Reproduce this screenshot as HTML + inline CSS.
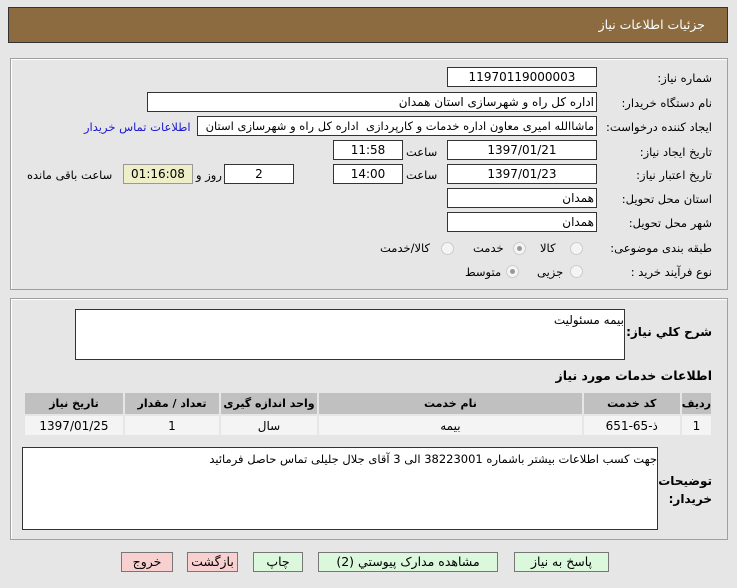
<html><head><style>
body{margin:0;width:737px;height:588px;background:#e6e6e6;font-family:Tahoma,"DejaVu Sans","Liberation Sans",sans-serif;font-size:11.5px;direction:rtl;position:relative;overflow:hidden}
.a{position:absolute}
.hdr{left:8px;top:7px;width:718px;height:34px;background:#8b6b3f;border:1px solid #333}
.hdr span{position:absolute;right:22px;top:9px;color:#fff;font-size:12.5px}
.pn{border:1px solid #a0a0a0;background:#e6e6e6;box-shadow:inset 1px 1px 0 #fff}
.in{position:absolute;background:#fff;border:1px solid #333;height:18px;line-height:18px;box-sizing:content-box;text-align:center;font-size:12px;white-space:nowrap;overflow:hidden}
.r{text-align:right;padding-right:2px}
.lb{position:absolute;right:25px;white-space:nowrap}
.t{position:absolute;white-space:nowrap}
.rd{position:absolute;width:11px;height:11px;border-radius:50%;border:1px solid #ccc;background:#f4f4f4}
.rd.c::after{content:"";position:absolute;left:3px;top:3px;width:5px;height:5px;border-radius:50%;background:#999}
table{border-collapse:collapse;position:absolute;left:23px;top:391px;width:690px;font-size:12px}
td,th{border:2px solid #e6e6e6;text-align:center;padding:0}
th{background:#c0c0c0;font-weight:bold;font-size:11px;height:23px}
td{background:#f4f4f4;height:21px}
.b{position:absolute;top:552px;height:18px;border:1px solid #777;text-align:center;line-height:18px;font-size:12.5px}
</style></head><body>
<div class="a hdr"><span>جزئیات اطلاعات نیاز</span></div>
<div class="a pn" style="left:10px;top:58px;width:716px;height:230px"></div>
<div class="a pn" style="left:10px;top:298px;width:716px;height:240px"></div>

<div class="lb" style="top:71px">شماره نیاز:</div>
<div class="in" style="left:447px;top:67px;width:148px">11970119000003</div>
<div class="lb" style="top:96px">نام دستگاه خریدار:</div>
<div class="in r" style="left:147px;top:92px;width:446px">اداره کل راه و شهرسازی استان همدان</div>
<div class="lb" style="top:120px">ایجاد کننده درخواست:</div>
<div class="in r" style="left:197px;top:116px;width:396px;font-size:11.5px">ماشاالله امیری معاون اداره خدمات و کارپردازی&nbsp; اداره کل راه و شهرسازی استان</div>
<div class="t" style="left:84px;top:120px;color:#1a1acc">اطلاعات تماس خریدار</div>
<div class="lb" style="top:145px">تاریخ ایجاد نیاز:</div>
<div class="in" style="left:447px;top:140px;width:148px">1397/01/21</div>
<div class="t" style="left:406px;top:145px">ساعت</div>
<div class="in" style="left:333px;top:140px;width:68px">11:58</div>
<div class="lb" style="top:168px">تاریخ اعتبار نیاز:</div>
<div class="in" style="left:447px;top:164px;width:148px">1397/01/23</div>
<div class="t" style="left:406px;top:168px">ساعت</div>
<div class="in" style="left:333px;top:164px;width:68px">14:00</div>
<div class="in" style="left:224px;top:164px;width:68px">2</div>
<div class="t" style="left:196px;top:168px">روز و</div>
<div class="in" style="left:123px;top:164px;width:68px;background:#eeeec8;border-color:#999">01:16:08</div>
<div class="t" style="left:27px;top:168px">ساعت باقی مانده</div>
<div class="lb" style="top:192px">استان محل تحویل:</div>
<div class="in r" style="left:447px;top:188px;width:146px">همدان</div>
<div class="lb" style="top:216px">شهر محل تحویل:</div>
<div class="in r" style="left:447px;top:212px;width:146px">همدان</div>
<div class="lb" style="top:241px">طبقه بندی موضوعی:</div>
<div class="rd" style="left:570px;top:242px"></div><div class="t" style="left:540px;top:241px">کالا</div>
<div class="rd c" style="left:513px;top:242px"></div><div class="t" style="left:473px;top:241px">خدمت</div>
<div class="rd" style="left:441px;top:242px"></div><div class="t" style="left:380px;top:241px">کالا/خدمت</div>
<div class="lb" style="top:265px">نوع فرآیند خرید :</div>
<div class="rd" style="left:570px;top:265px"></div><div class="t" style="left:537px;top:265px">جزیی</div>
<div class="rd c" style="left:506px;top:265px"></div><div class="t" style="left:465px;top:265px">متوسط</div>

<div class="t" style="right:25px;top:325px;font-weight:bold;font-size:12px">شرح کلي نیاز:</div>
<div class="in" style="left:75px;top:309px;width:548px;height:49px;text-align:right;line-height:20px;padding-right:0">بیمه مسئولیت</div>
<div class="t" style="right:25px;top:368px;font-weight:bold;font-size:12.5px">اطلاعات خدمات مورد نیاز</div>
<table><tr><th style="width:28px">ردیف</th><th style="width:96px">کد خدمت</th><th>نام خدمت</th><th style="width:96px">واحد اندازه گیری</th><th style="width:94px">تعداد / مقدار</th><th style="width:98px">تاریخ نیاز</th></tr>
<tr><td>1</td><td>ذ-65-651</td><td>بیمه</td><td>سال</td><td>1</td><td>1397/01/25</td></tr></table>
<div class="in" style="left:22px;top:447px;width:634px;height:81px;text-align:right;line-height:22px;font-size:11.5px">جهت کسب اطلاعات بیشتر باشماره 38223001 الی 3 آقای جلال جلیلی تماس حاصل فرمائید</div>
<div class="t" style="right:25px;top:472px;font-weight:bold;font-size:12px;line-height:18px;text-align:right">توضیحات<br>خریدار:</div>

<div class="b" style="left:121px;width:50px;background:#f8d0d0">خروج</div>
<div class="b" style="left:187px;width:49px;background:#f8d0d0">بازگشت</div>
<div class="b" style="left:253px;width:48px;background:#dcf8dc">چاپ</div>
<div class="b" style="left:318px;width:178px;background:#dcf8dc">مشاهده مدارک پیوستي (2)</div>
<div class="b" style="left:514px;width:93px;background:#dcf8dc">پاسخ به نیاز</div>
</body></html>
